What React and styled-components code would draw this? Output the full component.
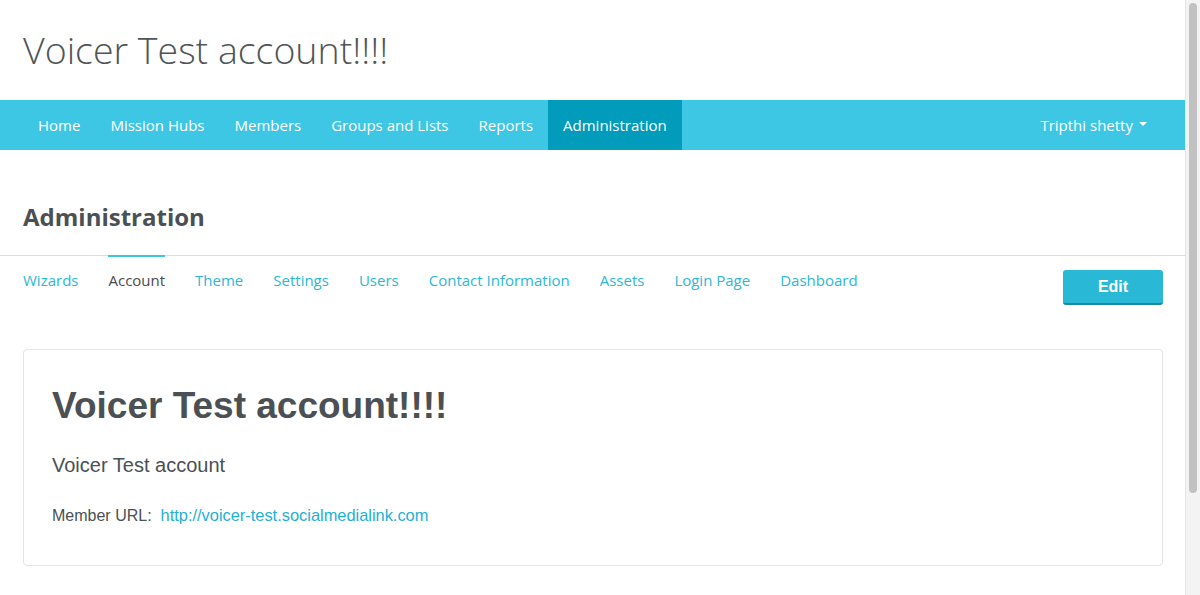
import React from "react"
import styled, { createGlobalStyle } from "styled-components"

const GlobalStyle = createGlobalStyle`
  html, body {
    margin: 0;
    padding: 0;
    background: #fff;
    height: 595px;
    overflow: hidden;
  }
  body {
    font-family: "Open Sans", "Liberation Sans", sans-serif;
    color: #4a5054;
  }
`

const Page = styled.div`
  display: flex;
  width: 1200px;
  height: 595px;
`

const Main = styled.div`
  flex: 1;
  min-width: 0;
`

const Scrollbar = styled.div`
  width: 15px;
  flex: none;
  background: #f3f3f3;
  border-left: 1px solid #e6e6e6;
  box-sizing: border-box;
  display: flex;
  justify-content: center;
  padding: 3px 0 0;
`

const Thumb = styled.div`
  width: 8px;
  height: 490px;
  border-radius: 4px;
  background: #c1c1c1;
`

const SiteTitle = styled.h1`
  margin: 0;
  padding: 25px 23px 0;
  height: 100px;
  box-sizing: border-box;
  font-family: "Open Sans", sans-serif;
  font-weight: 300;
  font-size: 37.5px;
  line-height: 50px;
  color: #4f5558;
`

const NavBar = styled.nav`
  background: #3ec6e5;
  height: 50px;
  display: flex;
  justify-content: space-between;
  padding: 0 23px;
`

const NavGroup = styled.div`
  display: flex;
`

const NavItem = styled.a`
  display: flex;
  align-items: center;
  padding: 0 15px;
  font-size: 15px;
  color: #fff;
  text-decoration: none;
  background: ${(p) => (p.active ? "#019bbb" : "transparent")};
`

const Caret = styled.span`
  display: inline-block;
  margin-left: 6px;
  border-left: 4px solid transparent;
  border-right: 4px solid transparent;
  border-top: 4px solid #fff;
  transform: translateY(-1px);
`

const PageHeading = styled.h2`
  margin: 0;
  padding: 51px 23px 0;
  height: 105px;
  box-sizing: border-box;
  font-size: 24px;
  font-weight: 700;
  line-height: 32px;
  color: #4a5054;
`

const TabsRow = styled.div`
  border-top: 1px solid #dcdcdc;
  display: flex;
  justify-content: space-between;
  padding: 0 22px 0 23px;
  height: 94px;
  box-sizing: border-box;
`

const Tabs = styled.div`
  display: flex;
  gap: 30px;
`

const Tab = styled.a`
  margin-top: -1px;
  padding-top: 13px;
  height: 26px;
  border-top: 2px solid ${(p) => (p.active ? "#3ec6e5" : "transparent")};
  font-size: 15px;
  line-height: 20px;
  color: ${(p) => (p.active ? "#4a4a4a" : "#2bb8d5")};
  text-decoration: none;
`

const EditButton = styled.button`
  margin-top: 14px;
  width: 100px;
  height: 35px;
  border: none;
  border-bottom: 2px solid #1a8aa3;
  border-radius: 3px;
  background: #29b8d6;
  color: #fff;
  font-family: "Liberation Sans", Arial, sans-serif;
  font-weight: 700;
  font-size: 16px;
  cursor: pointer;
`

const Card = styled.section`
  margin: 0 22px 0 23px;
  border: 1px solid #e4e4e4;
  border-radius: 4px;
  padding: 28px 28px 30px;
  height: 217px;
  box-sizing: border-box;
  font-family: "Liberation Sans", Arial, sans-serif;
`

const CardTitle = styled.h3`
  margin: 0;
  font-size: 37px;
  font-weight: 700;
  line-height: 56px;
  color: #4a5054;
`

const Subtitle = styled.p`
  margin: 19px 0 0;
  font-size: 20px;
  line-height: 24px;
  color: #4a5054;
`

const MetaLine = styled.p`
  margin: 28px 0 0;
  font-size: 16px;
  line-height: 20px;
  color: #4a5054;
`

const Link = styled.a`
  color: #1eb0d2;
  text-decoration: none;
  margin-left: 9px;
  font-size: 16.4px;
`

const navItems = ["Home", "Mission Hubs", "Members", "Groups and Lists", "Reports", "Administration"]
const tabs = ["Wizards", "Account", "Theme", "Settings", "Users", "Contact Information", "Assets", "Login Page", "Dashboard"]

export default function App() {
  return (
    <Page>
      <GlobalStyle />
      <Main>
        <SiteTitle>Voicer Test account!!!!</SiteTitle>
        <NavBar>
          <NavGroup>
            {navItems.map((item) => (
              <NavItem key={item} active={item === "Administration" ? 1 : 0}>
                {item}
              </NavItem>
            ))}
          </NavGroup>
          <NavItem>
            Tripthi shetty
            <Caret />
          </NavItem>
        </NavBar>
        <PageHeading>Administration</PageHeading>
        <TabsRow>
          <Tabs>
            {tabs.map((t) => (
              <Tab key={t} active={t === "Account" ? 1 : 0}>
                {t}
              </Tab>
            ))}
          </Tabs>
          <EditButton>Edit</EditButton>
        </TabsRow>
        <Card>
          <CardTitle>Voicer Test account!!!!</CardTitle>
          <Subtitle>Voicer Test account</Subtitle>
          <MetaLine>
            Member URL:
            <Link>http://voicer-test.socialmedialink.com</Link>
          </MetaLine>
        </Card>
      </Main>
      <Scrollbar>
        <Thumb />
      </Scrollbar>
    </Page>
  )
}
